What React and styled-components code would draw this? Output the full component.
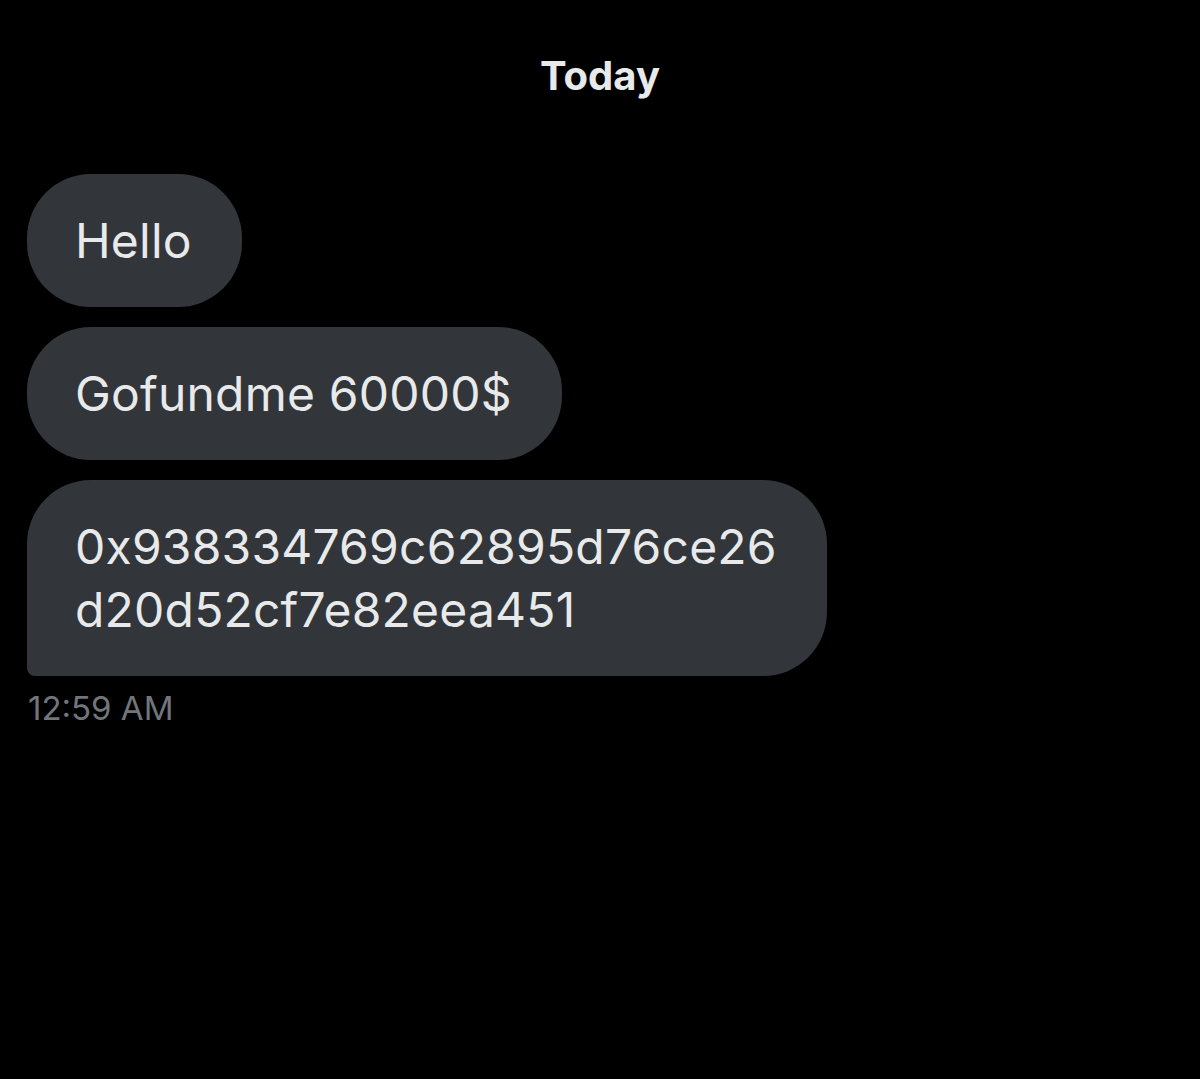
import React from 'react';
import styled, {createGlobalStyle} from 'styled-components';

const GlobalStyle = createGlobalStyle`
  html, body {
    margin: 0;
    padding: 0;
    background: #000;
  }
  body {
    font-family: Inter, "Noto Sans", "Liberation Sans", sans-serif;
    color: #e7e9ea;
  }
`;

const Screen = styled.div`
  width: 1200px;
  height: 1079px;
  background: #000;
  display: flex;
  flex-direction: column;
  overflow: hidden;
`;

const DayLabel = styled.div`
  margin-top: 52px;
  text-align: center;
  font-size: 40px;
  line-height: 48px;
  font-weight: 700;
  color: #e7e9ea;
`;

const Thread = styled.div`
  margin-top: 74px;
  padding-left: 27px;
  display: flex;
  flex-direction: column;
  align-items: flex-start;
  gap: 20px;
`;

const Bubble = styled.div`
  box-sizing: border-box;
  max-width: 800px;
  padding: 35px 50px 35px 48px;
  background: #323539;
  color: #e7e9ea;
  font-size: 48px;
  line-height: 63px;
  letter-spacing: 0.2px;
  word-break: break-all;
  border-radius: 64px;
  border-bottom-left-radius: ${p => (p.$last ? '8px' : '64px')};
`;

const Stamp = styled.div`
  margin-top: -8px;
  padding-left: 1px;
  font-size: 33px;
  line-height: 40px;
  color: #71767b;
`;

const messages = [
    'Hello',
    'Gofundme 60000$',
    '0x938334769c62895d76ce26d20d52cf7e82eea451',
];

export default function App() {
    return (
        <Screen>
            <GlobalStyle/>
            <DayLabel>Today</DayLabel>
            <Thread>
                {messages.map((text, i) => (
                    <Bubble key={i} $last={i === messages.length - 1}>
                        {text}
                    </Bubble>
                ))}
                <Stamp>12:59 AM</Stamp>
            </Thread>
        </Screen>
    );
}
